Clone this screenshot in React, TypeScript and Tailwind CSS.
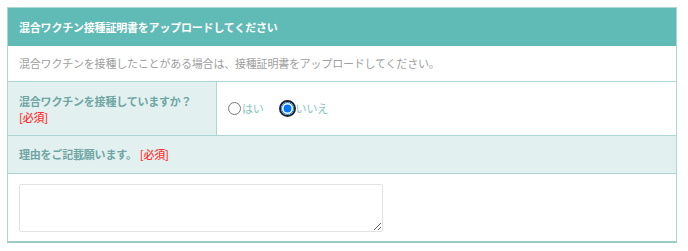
import React, { useState } from "react";

export default function App() {
  const [vaccinated, setVaccinated] = useState<"yes" | "no">("no");
  const [reason, setReason] = useState("");

  return (
    <div
      className="bg-white w-[688px] h-[251px] pt-[7px] pl-[7px]"
      style={{ fontFamily: '"Noto Sans CJK JP", "Noto Sans", sans-serif' }}
    >
      <div className="w-[670px] border border-[#aed6d4] border-b-2 border-b-[#9ccac7] text-[11px] tracking-[-0.2px]">
        {/* Header */}
        <div className="h-[38px] bg-[#60bab5] flex items-center px-[11px]">
          <h2 className="font-bold text-white">
            混合ワクチン接種証明書をアップロードしてください
          </h2>
        </div>

        {/* Description */}
        <div className="h-[36px] flex items-center px-[11px] border-b border-[#aed6d4]">
          <p className="text-[#a0a0a0]">
            混合ワクチンを接種したことがある場合は、接種証明書をアップロードしてください。
          </p>
        </div>

        {/* Question row */}
        <div className="flex h-[53px]">
          <div className="w-[209px] bg-[#e2f0f0] border-r border-[#aed6d4] px-[11px] flex flex-col justify-center leading-[16px]">
            <span className="font-bold text-[#6fa5a3]">
              混合ワクチンを接種していますか？
            </span>
            <span className="font-medium text-[#ff3333]">[必須]</span>
          </div>
          <div className="flex-1 flex items-center pl-[11px] gap-[15px] text-[#8cc3c1]">
            <label className="flex items-center gap-[1px] cursor-pointer">
              <input
                type="radio"
                name="vac"
                checked={vaccinated === "yes"}
                onChange={() => setVaccinated("yes")}
                className="w-[13px] h-[13px] m-0 accent-[#0075ff]"
              />
              <span>はい</span>
            </label>
            <label className="flex items-center cursor-pointer">
              <span className="w-[17px] h-[17px] rounded-full border-2 border-[#222] flex items-center justify-center">
                <input
                  type="radio"
                  name="vac"
                  checked={vaccinated === "no"}
                  onChange={() => setVaccinated("no")}
                  className="w-[13px] h-[13px] m-0 accent-[#0075ff]"
                />
              </span>
              <span>いいえ</span>
            </label>
          </div>
        </div>

        {/* Reason header */}
        <div className="h-[39px] bg-[#e2f0f0] border-y border-[#aed6d4] flex items-center px-[11px]">
          <span className="font-bold text-[#6fa5a3]">
            理由をご記載願います。
            <span className="ml-[3px] font-medium text-[#ff3333]">[必須]</span>
          </span>
        </div>

        {/* Textarea row */}
        <div className="h-[67px] px-[11px] pt-[10px]">
          <textarea
            value={reason}
            onChange={(e) => setReason(e.target.value)}
            className="block w-[364px] h-[48px] border border-[#e2e2e2] rounded-[2px] p-1 outline-none"
          />
        </div>
      </div>
    </div>
  );
}
